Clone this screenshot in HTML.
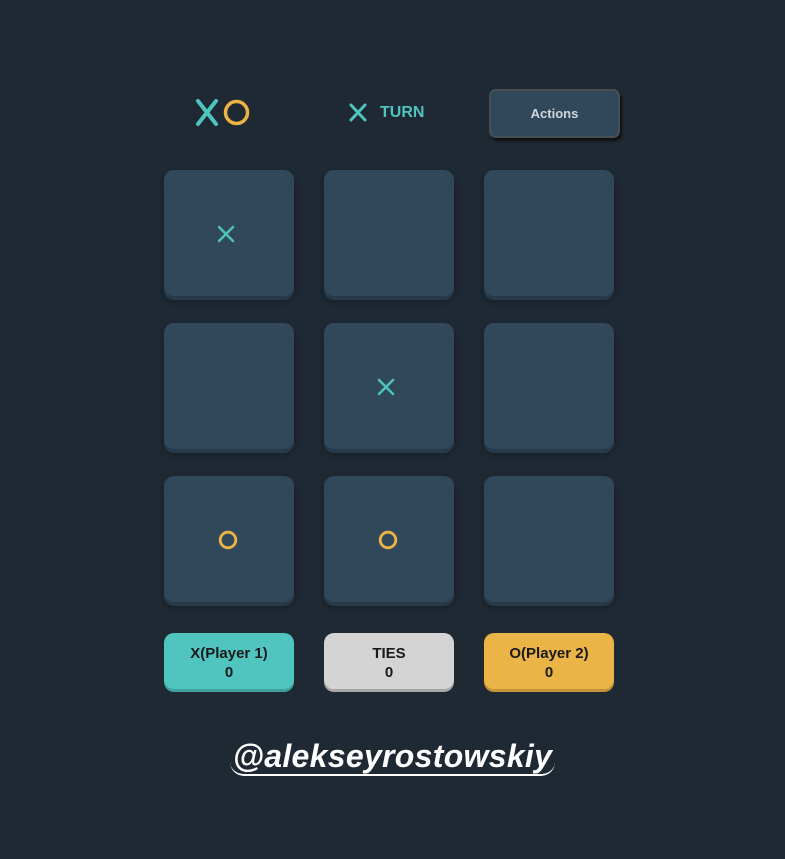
<!DOCTYPE html>
<html><head><style>
body{margin:0;background:#1f2933;width:785px;height:859px;position:relative;font-family:"Liberation Sans",sans-serif;overflow:hidden}
.c{position:absolute;width:130px;height:126px;background:#31475a;border-radius:10px;box-shadow:0 4px 0 #283a4a,0 5px 8px rgba(0,0,0,.3)}
.s{position:absolute;width:130px;height:56px;border-radius:10px;top:633px;text-align:center;font-weight:bold;font-size:15px;color:#1a1a1a;line-height:19px;padding-top:11px;box-sizing:border-box}
svg{position:absolute}
</style></head><body>
<svg style="left:194px;top:98px" width="60" height="30"><path d="M4 3L22 26M22 3L4 26" stroke="#4fc3bd" stroke-width="4" stroke-linecap="round"/><circle cx="42.5" cy="14.5" r="11" fill="none" stroke="#ebb445" stroke-width="3.5"/></svg>
<svg style="left:348px;top:102px" width="20" height="20"><path d="M3 3L17 18M17 3L3 18" stroke="#4fc3bd" stroke-width="3" stroke-linecap="round"/></svg>
<div style="position:absolute;left:380px;top:104px;color:#4fc3bd;font-weight:bold;font-size:16px">TURN</div>
<div style="position:absolute;left:489px;top:89px;width:127px;height:45px;background:#31475a;border:2px solid #474e55;border-radius:7px;box-shadow:2px 3px 2px #111;color:#cfd6dc;font-weight:bold;font-size:13px;text-align:center;line-height:45px">Actions</div>

<div class="c" style="left:164px;top:170px"></div>
<div class="c" style="left:324px;top:170px"></div>
<div class="c" style="left:484px;top:170px"></div>
<div class="c" style="left:164px;top:323px"></div>
<div class="c" style="left:324px;top:323px"></div>
<div class="c" style="left:484px;top:323px"></div>
<div class="c" style="left:164px;top:476px"></div>
<div class="c" style="left:324px;top:476px"></div>
<div class="c" style="left:484px;top:476px"></div>

<svg style="left:217px;top:225px" width="18" height="18"><path d="M2 2L16 16M16 2L2 16" stroke="#4fc3bd" stroke-width="2.5" stroke-linecap="round"/></svg>
<svg style="left:377px;top:378px" width="18" height="18"><path d="M2 2L16 16M16 2L2 16" stroke="#4fc3bd" stroke-width="2.5" stroke-linecap="round"/></svg>
<svg style="left:218px;top:530px" width="20" height="20"><circle cx="10" cy="10" r="7.8" fill="none" stroke="#ebb445" stroke-width="2.8"/></svg>
<svg style="left:378px;top:530px" width="20" height="20"><circle cx="10" cy="10" r="7.8" fill="none" stroke="#ebb445" stroke-width="2.8"/></svg>

<div class="s" style="left:164px;background:#50c4be;box-shadow:0 3px 0 #3ea19b">X(Player 1)<br>0</div>
<div class="s" style="left:324px;background:#d4d4d4;box-shadow:0 3px 0 #a8a8a8">TIES<br>0</div>
<div class="s" style="left:484px;background:#ebb446;box-shadow:0 3px 0 #c4933a">O(Player 2)<br>0</div>

<div style="position:absolute;left:0;width:785px;top:738px;text-align:center;color:#fff;font-weight:bold;font-style:italic;font-size:32px;letter-spacing:0.3px"><span style="border-bottom:2px solid #fff;border-radius:0 0 14px 14px;padding:0 3px">@alekseyrostowskiy</span></div>
</body></html>
